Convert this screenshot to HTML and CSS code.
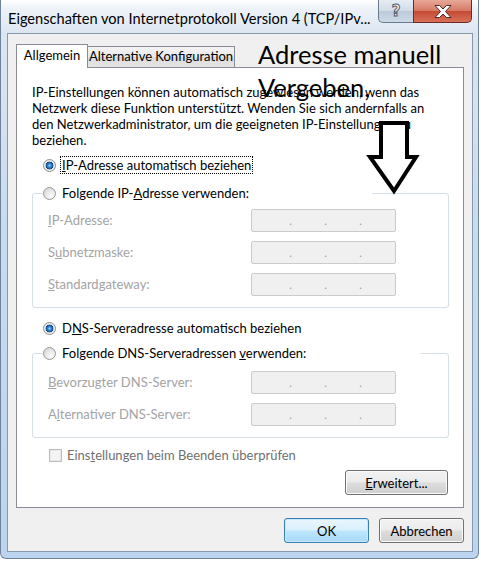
FILE: index.html
```html
<!DOCTYPE html>
<html lang="de">
<head>
<meta charset="utf-8">
<title>Eigenschaften von Internetprotokoll Version 4</title>
<link rel="stylesheet" href="styles.css">
</head>
<body>
<div class="window">
  <div class="titlebar">
    <span class="title">Eigenschaften von Internetprotokoll Version 4 (TCP/IPv...</span>
    <div class="caption">
      <div class="cbtn help"><span class="qmark">?</span></div>
      <div class="cbtn close">
        <svg width="20" height="13" viewBox="0 0 20 13">
          <polygon points="2,0.5 6.5,0.5 10,4 13.5,0.5 18,0.5 12.5,6.5 18,12.5 13.5,12.5 10,9 6.5,12.5 2,12.5 7.5,6.5" fill="#ffffff" stroke="#4a2a2a" stroke-width="1" stroke-linejoin="round"/>
        </svg>
      </div>
    </div>
  </div>
  <div class="client">
    <div class="tabs">
      <div class="tab active">Allgemein</div>
      <div class="tab">Alternative Konfiguration</div>
    </div>
    <div class="panel">
      <p class="intro">IP-Einstellungen können automatisch zugewiesen werden, wenn das<br>Netzwerk diese Funktion unterstützt. Wenden Sie sich andernfalls an<br>den Netzwerkadministrator, um die geeigneten IP-Einstellungen zu<br>beziehen.</p>

      <div class="radio-row">
        <span class="radio checked"></span>
        <span class="rlabel focused"><u>I</u>P-Adresse automatisch beziehen</span>
      </div>

      <fieldset class="group">
        <legend class="legend legend-ip">
          <span class="radio"></span>
          <span class="rlabel">Folgende IP-<u>A</u>dresse verwenden:</span>
        </legend>
        <div class="fields">
          <div class="field-row">
            <span class="flabel"><u>I</u>P-Adresse:</span>
            <div class="ipbox"><span></span><span class="dot">.</span><span></span><span class="dot">.</span><span></span><span class="dot">.</span><span></span></div>
          </div>
          <div class="field-row">
            <span class="flabel">S<u>u</u>bnetzmaske:</span>
            <div class="ipbox"><span></span><span class="dot">.</span><span></span><span class="dot">.</span><span></span><span class="dot">.</span><span></span></div>
          </div>
          <div class="field-row">
            <span class="flabel"><u>S</u>tandardgateway:</span>
            <div class="ipbox"><span></span><span class="dot">.</span><span></span><span class="dot">.</span><span></span><span class="dot">.</span><span></span></div>
          </div>
        </div>
      </fieldset>

      <div class="radio-row dns-auto">
        <span class="radio checked"></span>
        <span class="rlabel">D<u>N</u>S-Serveradresse automatisch beziehen</span>
      </div>

      <fieldset class="group dns">
        <legend class="legend legend-dns">
          <span class="radio"></span>
          <span class="rlabel">Folgende DNS-Serveradressen <u>v</u>erwenden:</span>
        </legend>
        <div class="fields">
          <div class="field-row">
            <span class="flabel"><u>B</u>evorzugter DNS-Server:</span>
            <div class="ipbox"><span></span><span class="dot">.</span><span></span><span class="dot">.</span><span></span><span class="dot">.</span><span></span></div>
          </div>
          <div class="field-row">
            <span class="flabel">A<u>l</u>ternativer DNS-Server:</span>
            <div class="ipbox"><span></span><span class="dot">.</span><span></span><span class="dot">.</span><span></span><span class="dot">.</span><span></span></div>
          </div>
        </div>
      </fieldset>

      <div class="check-row">
        <span class="checkbox"></span>
        <span class="clabel">Eins<u>t</u>ellungen beim Beenden überprüfen</span>
      </div>

      <div class="adv-row">
        <button class="btn adv" type="button"><u>E</u>rweitert...</button>
      </div>
    </div>
    <div class="dialog-buttons">
      <button class="btn default" type="button">OK</button>
      <button class="btn" type="button">Abbrechen</button>
    </div>
  </div>

  <div class="annotation">Adresse manuell<br>Vergeben,</div>
  <svg class="arrow" width="481" height="561" viewBox="0 0 481 561">
    <polygon points="381,123 407,123 407,157 416,157 394,191 370,157 381,157" fill="#ffffff" stroke="#000000" stroke-width="4" stroke-linejoin="miter"/>
  </svg>
</div>
</body>
</html>
```

FILE: styles.css
```css
* {
  box-sizing: border-box;
}

body {
  margin: 0;
  background: #ffffff;
  font-family: "Lato", "Open Sans", sans-serif;
  font-size: 13px;
  color: #000000;
}

.window {
  position: relative;
  width: 479px;
  height: 559px;
  display: flex;
  flex-direction: column;
  border: 1px solid #6f829a;
  border-top: none;
  border-radius: 0 0 6px 6px;
  background: linear-gradient(to bottom, #ffffff 0px, #eef3f8 8px, #dce6f1 33px, #c9dbef 220px, #bcd4ef 100%);
}

/* title bar */
.titlebar {
  height: 33px;
  flex: none;
  display: flex;
  align-items: flex-start;
  padding: 0 6px 0 7px;
}

.title {
  flex: 1;
  min-width: 0;
  white-space: nowrap;
  font-size: 14.6px;
  line-height: 20px;
  padding-top: 9px;
  color: #000000;
}

.caption {
  display: flex;
  flex: none;
}

.cbtn {
  height: 23px;
  display: flex;
  align-items: center;
  justify-content: center;
  border: 1px solid #6a7a8c;
  border-top: none;
}

.help {
  width: 35px;
  border-right: none;
  border-radius: 0 0 0 5px;
  background: linear-gradient(to bottom, #e6ecf3 0%, #d2dce7 48%, #bccadb 52%, #cdd9e6 100%);
}

.qmark {
  font-family: "DejaVu Sans", sans-serif;
  font-weight: bold;
  font-size: 15px;
  line-height: 15px;
  color: #ffffff;
  -webkit-text-stroke: 1px #4b5a6b;
}

.close {
  width: 59px;
  border-color: #6e2a22;
  border-radius: 0 0 5px 0;
  background: linear-gradient(to bottom, #e8a898 0%, #d67a66 48%, #c64a34 52%, #d8705a 100%);
}

/* client */
.client {
  flex: 1;
  margin: 0 5px 6px 6px;
  border: 1px solid #8799ad;
  background: #f0f0f0;
  padding: 10px 8px 8px 8px;
  display: flex;
  flex-direction: column;
}

.tabs {
  display: flex;
  align-items: flex-end;
  height: 23px;
  position: relative;
  z-index: 1;
}

.tab {
  height: 21px;
  width: 147px;
  border: 1px solid #898c95;
  border-left: none;
  border-bottom: none;
  background: linear-gradient(to bottom, #f4f4f4 0%, #e9e9e9 50%, #dcdcdc 52%, #e4e4e4 100%);
  text-align: center;
  line-height: 19px;
  white-space: nowrap;
}

.tab.active {
  width: 72px;
  height: 24px;
  margin-bottom: -1px;
  border-left: 1px solid #898c95;
  background: #ffffff;
  line-height: 20px;
}

.panel {
  background: #ffffff;
  border: 1px solid #898c95;
  padding: 0 0 12px 0;
  display: flex;
  flex-direction: column;
}

.intro {
  margin: 16px 0 0 15px;
  line-height: 16px;
  white-space: nowrap;
}

.radio-row {
  display: flex;
  align-items: center;
  height: 18px;
  margin: 8px 0 0 26px;
}

.radio-row.dns-auto {
  margin-top: 11px;
}

.radio {
  flex: none;
  width: 13px;
  height: 13px;
  border-radius: 50%;
  border: 1px solid #9a9a9a;
  background: radial-gradient(circle at 65% 70%, #fdfdfd 0, #eaeaea 40%, #cfcfcf 100%);
  margin-right: 4px;
}

.radio.checked {
  border-color: #8a8f96;
  background: radial-gradient(circle at 50% 50%, #9fd6ff 0, #3a8fdc 1.5px, #1b5fa8 3px, #0f3f78 3.6px, #e9e9e9 4.2px, #f6f6f6 100%);
}

.rlabel {
  border: 1px dotted transparent;
  padding: 0 1px;
  line-height: 16px;
  white-space: nowrap;
}

.rlabel.focused {
  border-color: #000000;
}

.group {
  margin: 10px 14px 0 15px;
  padding: 7px 0 10px 0;
  border: 1px solid #d5dfe5;
  border-radius: 3px;
  min-inline-size: 0;
}

.group.dns {
  margin-top: 7px;
  padding-top: 9px;
}

.legend {
  display: flex;
  align-items: center;
  height: 18px;
  padding: 0;
  margin-left: 10px;
}

.legend-ip {
  width: 329px;
}

.legend-dns {
  width: 378px;
}

.fields {
  display: flex;
  flex-direction: column;
  gap: 8px;
  padding-left: 15px;
}

.field-row {
  display: flex;
  align-items: flex-start;
  height: 24px;
}

.flabel {
  width: 203px;
  line-height: 23px;
  color: #a3a3a3;
  white-space: nowrap;
}

.ipbox {
  width: 145px;
  height: 23px;
  border: 1px solid #cbcbcb;
  border-radius: 2px;
  background: #f0f0f0;
  display: grid;
  grid-template-columns: 37px 3px 32px 3px 32px 3px 1fr;
  line-height: 21px;
  color: #9a9a9a;
}

.dot {
  text-align: center;
  font-size: 11px;
}

.check-row {
  display: flex;
  align-items: center;
  height: 16px;
  margin: 9px 0 0 32px;
}

.checkbox {
  flex: none;
  width: 13px;
  height: 13px;
  border: 1px solid #bdbdbd;
  background: #f4f4f4;
  box-shadow: inset 0 0 0 1px #e8e8e8;
  margin-right: 5px;
}

.clabel {
  color: #707070;
  white-space: nowrap;
}

.adv-row {
  display: flex;
  justify-content: flex-end;
  margin: 7px 15px 0 0;
}

.btn {
  font-family: inherit;
  font-size: 13px;
  color: #000000;
  height: 25px;
  width: 85px;
  padding: 0;
  border: 1px solid #707070;
  border-radius: 3px;
  background: linear-gradient(to bottom, #f2f2f2 0%, #ebebeb 48%, #dddddd 52%, #cfcfcf 100%);
  box-shadow: inset 0 0 0 1px #fbfbfb;
}

.btn.adv {
  width: 103px;
}

.btn.default {
  border-color: #3c7fb1;
  background: linear-gradient(to bottom, #eaf6fd 0%, #d9f0fc 48%, #bee6fd 52%, #a7d9f5 100%);
  box-shadow: inset 0 0 0 1px #c4e8fd;
}

.dialog-buttons {
  display: flex;
  justify-content: flex-end;
  gap: 10px;
  margin-top: 10px;
}

/* annotation drawn over the dialog */
.annotation {
  position: absolute;
  left: 257px;
  top: 38px;
  font-family: "Lato", sans-serif;
  font-size: 25.5px;
  line-height: 33px;
  color: #000000;
  white-space: nowrap;
  pointer-events: none;
}

.arrow {
  position: absolute;
  left: -1px;
  top: 0;
  pointer-events: none;
}
```
